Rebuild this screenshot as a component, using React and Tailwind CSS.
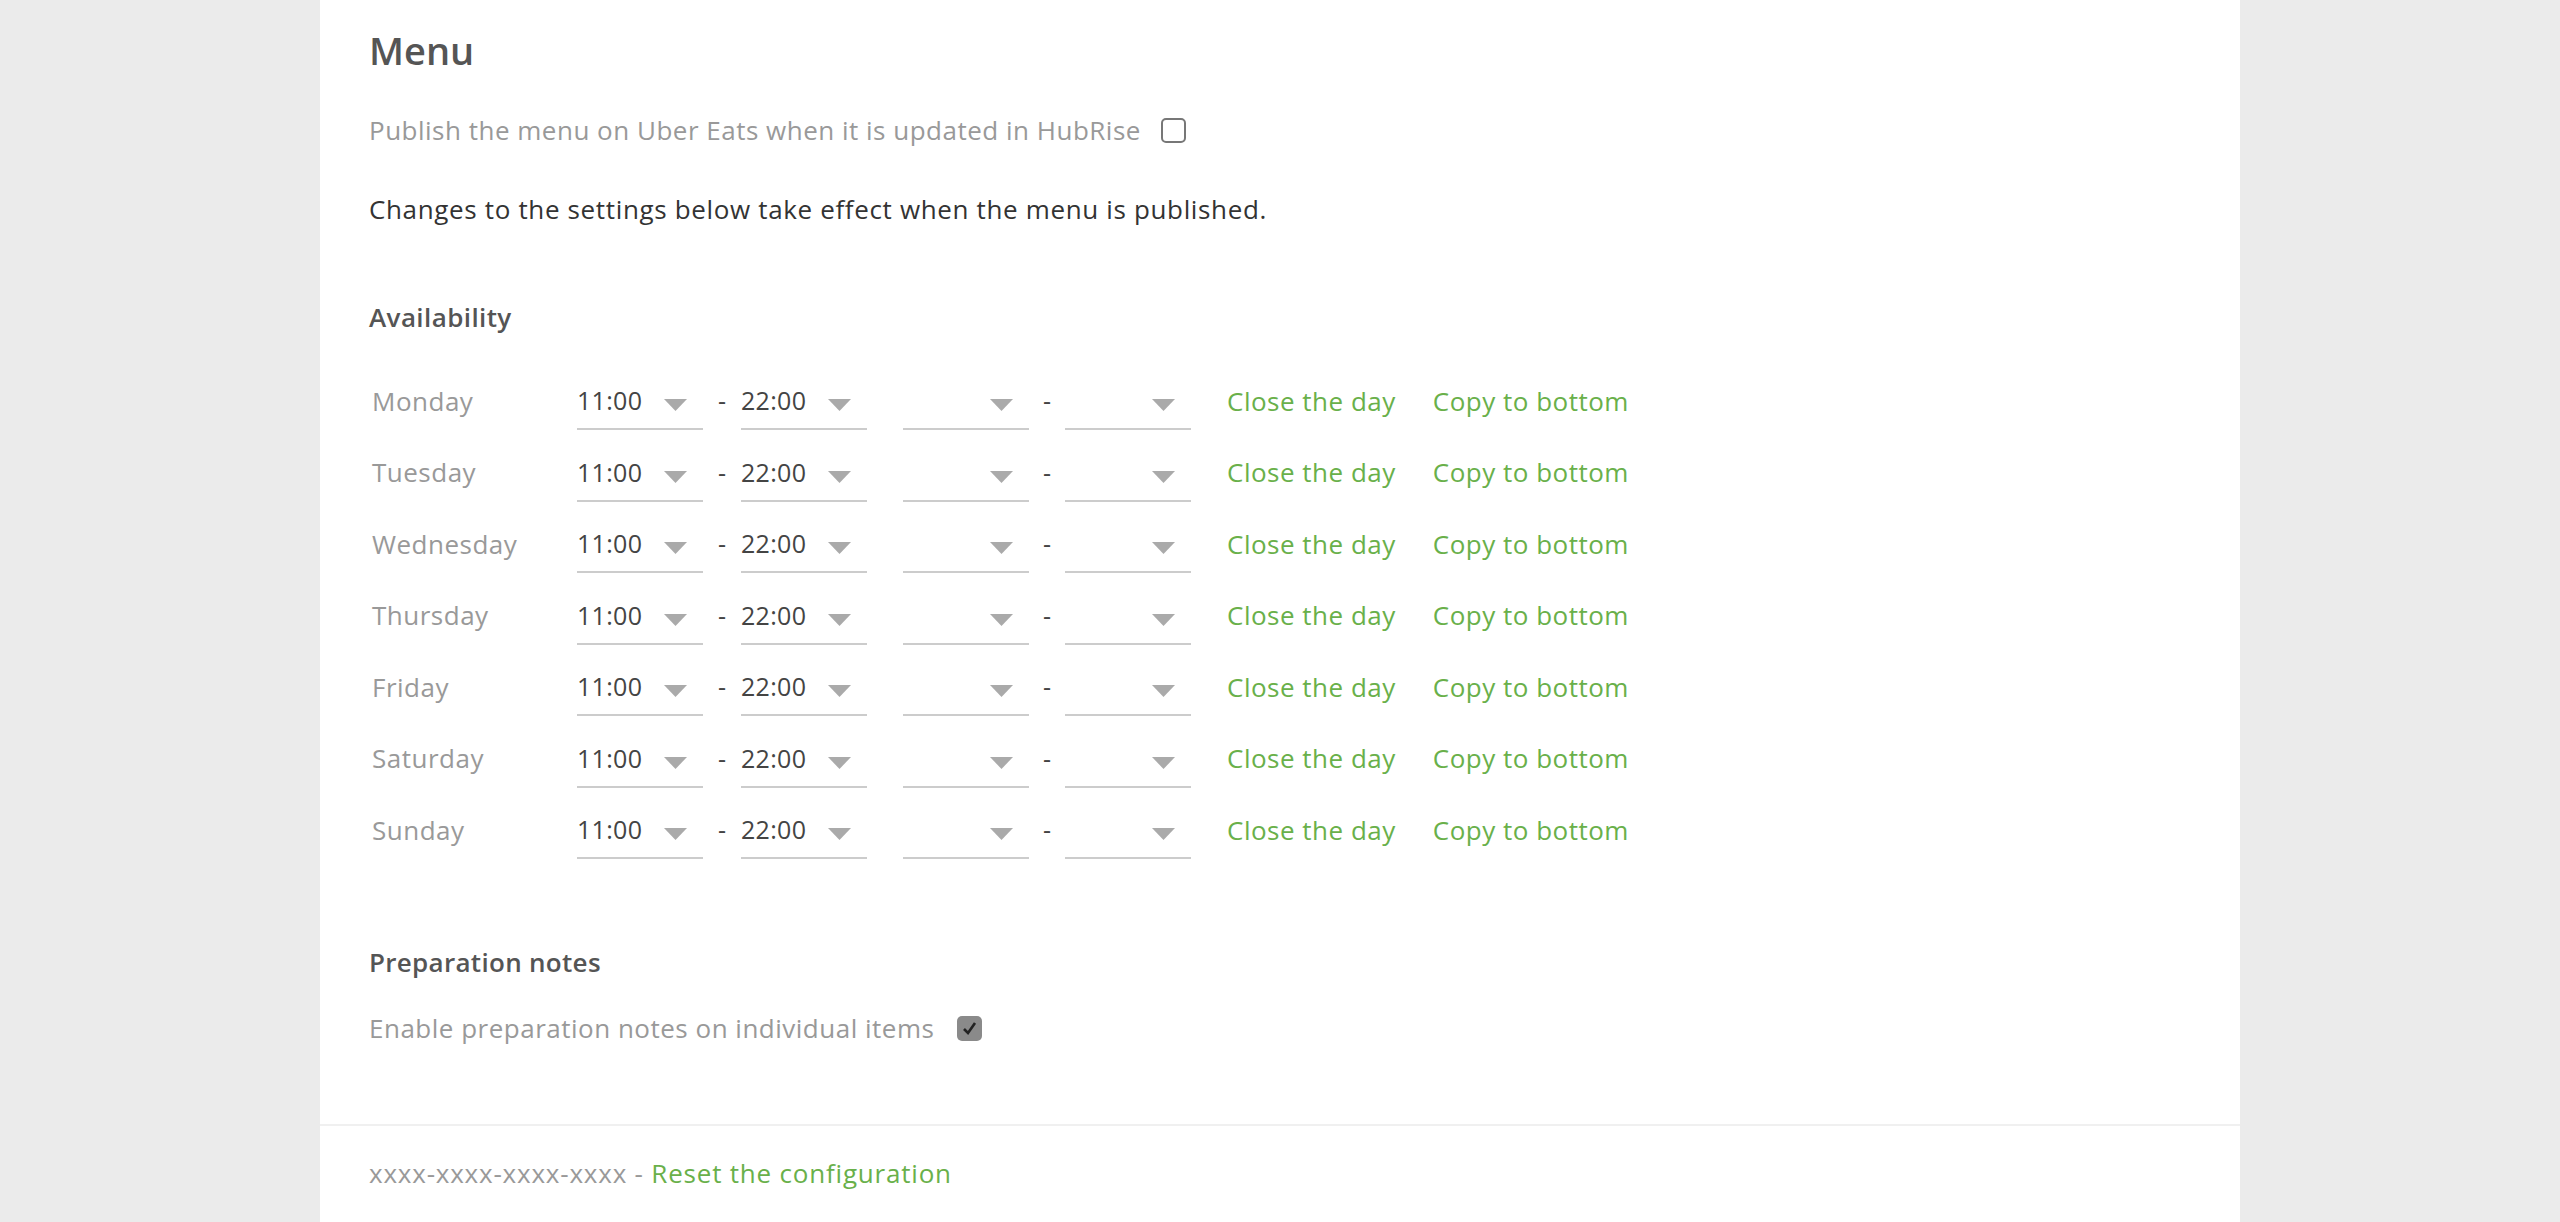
import React from "react";

const days = ["Monday", "Tuesday", "Wednesday", "Thursday", "Friday", "Saturday", "Sunday"];

function TimeSelect({ value }) {
    return (
        <div className="w-[126px] h-[58px] border-b-2 border-[#cccccc] flex items-center justify-between">
            <span className="text-[25px] tracking-[0.3px] text-[#444444] leading-[36px]">{value}</span>
            <svg width="23" height="12" viewBox="0 0 23 12" className="mr-[16px] mt-[10px]">
                <polygon points="0,0 23,0 11.5,12" fill="#aaaaaa" />
            </svg>
        </div>
    );
}

function DayRow({ day }) {
    return (
        <div className="flex items-start h-[71.5px]">
            <div className="w-[208px] h-[58px] pl-[3px] flex items-center text-[26px] tracking-[0.5px] text-[#999999]">{day}</div>
            <TimeSelect value="11:00" />
            <div className="w-[38px] h-[58px] flex items-center justify-center text-[25px] text-[#444444]">-</div>
            <TimeSelect value="22:00" />
            <div className="w-[36px]"></div>
            <TimeSelect value="" />
            <div className="w-[36px] h-[58px] flex items-center justify-center text-[25px] text-[#444444]">-</div>
            <TimeSelect value="" />
            <a className="ml-[36px] h-[58px] flex items-center text-[26px] tracking-[0.5px] text-[#69b04a] cursor-pointer">Close the day</a>
            <a className="ml-[37px] h-[58px] flex items-center text-[26px] tracking-[0.5px] text-[#69b04a] cursor-pointer">Copy to bottom</a>
        </div>
    );
}

export default function App() {
    return (
        <div className="min-h-screen bg-[#ebebeb]" style={{ fontFamily: '"Open Sans", "Noto Sans", sans-serif' }}>
            <div className="ml-[320px] w-[1920px] min-h-[1222px] bg-white">
                <div className="pl-[49px] pt-[26px] pb-[77px]">
                    <h1 className="text-[38px] leading-[48px] font-semibold text-[#555555]">Menu</h1>

                    <div className="mt-[38px] flex items-center h-[36px]">
                        <span className="text-[26px] tracking-[0.5px] text-[#999999]">Publish the menu on Uber Eats when it is updated in HubRise</span>
                        <span className="ml-[20px] w-[25px] h-[25px] border-2 border-[#777777] rounded-[5px] bg-white"></span>
                    </div>

                    <p className="mt-[43px] text-[26px] tracking-[0.65px] leading-[36px] text-[#333333]">
                        Changes to the settings below take effect when the menu is published.
                    </p>

                    <h2 className="mt-[72px] text-[26px] tracking-[0.4px] leading-[36px] font-semibold text-[#555555]">Availability</h2>

                    <div className="mt-[37px]">
                        {days.map((d) => (
                            <DayRow key={d} day={d} />
                        ))}
                    </div>

                    <h2 className="mt-[71px] text-[26px] tracking-[0.3px] leading-[36px] font-semibold text-[#555555]">Preparation notes</h2>

                    <div className="mt-[31px] flex items-center h-[36px]">
                        <span className="text-[26px] tracking-[0.5px] text-[#999999]">Enable preparation notes on individual items</span>
                        <span className="ml-[23px] w-[25px] h-[25px] rounded-[5px] bg-[#8a8a8a] flex items-center justify-center">
                            <svg width="17" height="17" viewBox="0 0 17 17">
                                <path d="M3 9 L7 13 L14 3" fill="none" stroke="#222222" strokeWidth="2.6" />
                            </svg>
                        </span>
                    </div>
                </div>

                <div className="border-t-2 border-[#f0f0f0] pl-[49px] pt-[29px]">
                    <div className="text-[26px] tracking-[0.8px] leading-[36px]">
                        <span className="text-[#999999]">xxxx-xxxx-xxxx-xxxx - </span>
                        <a className="text-[#69b04a] cursor-pointer">Reset the configuration</a>
                    </div>
                </div>
            </div>
        </div>
    );
}
